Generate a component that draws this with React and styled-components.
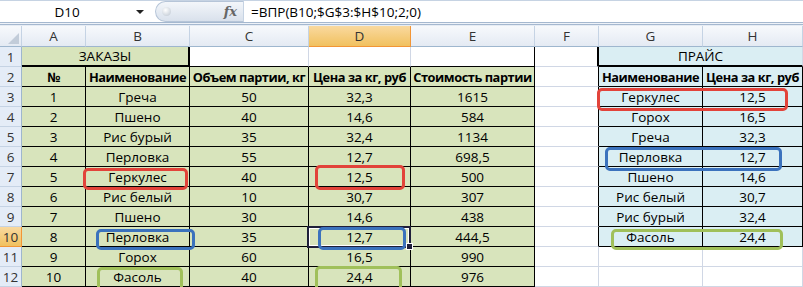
import React from 'react'
import styled, { createGlobalStyle } from 'styled-components'

const Global = createGlobalStyle`
  body {
    margin: 0;
    background: #fff;
    overflow: hidden;
  }
`

const FONT = '"Open Sans", "Noto Sans", "Liberation Sans", sans-serif'
const GRID = '#D0D7E5'
const HDR = '#9EB6CE'

const Page = styled.div`
  position: relative;
  width: 803px;
  height: 287px;
  overflow: hidden;
  background: #fff;
  font-family: ${FONT};
  color: #000;
`

const FormulaBar = styled.div`
  display: flex;
  height: 23px;
  box-sizing: border-box;
  border-top: 1px solid #C6D3E3;
  border-bottom: 1px solid #A5B8CF;
  background: #fff;
`

const NameBox = styled.div`
  position: relative;
  width: 152px;
  display: flex;
  align-items: center;
  justify-content: center;
  padding-right: 18px;
  box-sizing: border-box;
  font-size: 13.5px;
  .arrow {
    position: absolute;
    right: 8px;
    top: 9px;
    border-left: 4px solid transparent;
    border-right: 4px solid transparent;
    border-top: 4px solid #222;
  }
`

const Grip = styled.div`
  position: relative;
  width: 88px;
  margin: 0 0 0 3px;
  border-radius: 12px 0 0 12px;
  background: linear-gradient(#F3F6FA, #D9E1EC);
  border: 1px solid #B6C5D8;
  border-right: none;
  box-sizing: border-box;
  display: flex;
  align-items: center;
  justify-content: flex-end;
  padding-right: 6px;
  .dot {
    position: absolute;
    left: 6px;
    top: 5px;
    width: 9px;
    height: 9px;
    border-radius: 50%;
    background: radial-gradient(circle at 40% 35%, #fff, #B9C3CF);
  }
  .fx {
    font-family: "DejaVu Serif", "Liberation Serif", serif;
    font-style: italic;
    font-weight: bold;
    font-size: 13px;
    color: #666;
  }
`

const Formula = styled.div`
  flex: 1;
  display: flex;
  align-items: center;
  padding-left: 7px;
  font-size: 13.5px;
  border-left: 1px solid #C6D3E3;
`

const Band = styled.div`
  height: 3px;
  background: linear-gradient(#EEF2F8 0 1px, #A5B8CF 1px 2px, #E6ECF4 2px);
`

const Sheet = styled.div`
  display: grid;
  grid-template-columns: 22px 64px 104px 119px 102px 124px 64px 104px 1fr;
  grid-template-rows: 21px;
  grid-auto-rows: 20px;
`

const ColHead = styled.div`
  display: flex;
  align-items: center;
  justify-content: center;
  box-sizing: border-box;
  font-size: 13.5px;
  color: #333;
  border-right: 1px solid ${p => (p.$sel ? '#F29536' : '#C5D3E4')};
  border-bottom: 1px solid ${p => (p.$sel ? '#F29536' : HDR)};
  background: ${p =>
    p.$sel
      ? 'linear-gradient(#F9D99F, #F1C15F)'
      : 'linear-gradient(#F7F9FC, #E4EAF3)'};
`

const Corner = styled(ColHead)`
  position: relative;
  &::after {
    content: "";
    position: absolute;
    right: 2px;
    bottom: 2px;
    border-left: 11px solid transparent;
    border-bottom: 11px solid #C2CCD9;
  }
`

const RowHead = styled.div`
  display: flex;
  align-items: center;
  justify-content: center;
  box-sizing: border-box;
  font-size: 13.5px;
  color: #333;
  border-right: 1px solid ${p => (p.$sel ? '#F29536' : HDR)};
  border-bottom: 1px solid ${p => (p.$sel ? '#F29536' : '#C5D3E4')};
  background: ${p => (p.$sel ? 'linear-gradient(#F9D99F, #F1C15F)' : '#E4ECF7')};
`

const Cell = styled.div`
  display: flex;
  align-items: center;
  justify-content: center;
  box-sizing: border-box;
  white-space: nowrap;
  overflow: hidden;
  font-size: ${p => (p.$bold ? '12.8px' : '13.5px')};
  letter-spacing: ${p => (p.$bold ? '-0.45px' : 'normal')};
  font-weight: ${p => (p.$bold ? 700 : 400)};
  background: ${p => p.$bg || '#fff'};
  border-right: ${p => p.$r || `1px solid ${GRID}`};
  border-bottom: ${p => p.$b || `1px solid ${GRID}`};
  grid-column: ${p => (p.$span ? `span ${p.$span}` : 'auto')};
`

const Ring = styled.div`
  position: absolute;
  left: ${p => p.$x}px;
  top: ${p => p.$y}px;
  width: ${p => p.$w}px;
  height: ${p => p.$h}px;
  box-sizing: border-box;
  border: 3px solid ${p => p.$c};
  border-radius: 5px;
  pointer-events: none;
`

const Selection = styled.div`
  position: absolute;
  left: 307px;
  top: 226px;
  width: 104px;
  height: 22px;
  box-sizing: border-box;
  border: 2px solid #1F1F3A;
  box-shadow: inset 0 0 0 1px #fff;
  &::after {
    content: "";
    position: absolute;
    right: -4px;
    bottom: -4px;
    width: 5px;
    height: 5px;
    background: #1F1F3A;
    border: 1px solid #fff;
  }
`

const GREEN = '#D8E4BC'
const BLUE = '#DAEEF3'
const BLACK = '1px solid #000'
const THICK = '2px solid #000'

const orders = [
  ['1', 'Греча', '50', '32,3', '1615'],
  ['2', 'Пшено', '40', '14,6', '584'],
  ['3', 'Рис бурый', '35', '32,4', '1134'],
  ['4', 'Перловка', '55', '12,7', '698,5'],
  ['5', 'Геркулес', '40', '12,5', '500'],
  ['6', 'Рис белый', '10', '30,7', '307'],
  ['7', 'Пшено', '30', '14,6', '438'],
  ['8', 'Перловка', '35', '12,7', '444,5'],
  ['9', 'Горох', '60', '16,5', '990'],
  ['10', 'Фасоль', '40', '24,4', '976'],
]

const prices = [
  ['Геркулес', '12,5'],
  ['Горох', '16,5'],
  ['Греча', '32,3'],
  ['Перловка', '12,7'],
  ['Пшено', '14,6'],
  ['Рис белый', '30,7'],
  ['Рис бурый', '32,4'],
  ['Фасоль', '24,4'],
]

const cols = ['A', 'B', 'C', 'D', 'E', 'F', 'G', 'H']

const rings = [
  { x: 83, y: 168, w: 105, h: 22, c: '#E2433A' },
  { x: 315, y: 165, w: 90, h: 25, c: '#E2433A' },
  { x: 597, y: 88, w: 191, h: 23, c: '#E2433A' },
  { x: 96, y: 229, w: 99, h: 21, c: '#3B72BD' },
  { x: 318, y: 227, w: 88, h: 23, c: '#3B72BD' },
  { x: 605, y: 147, w: 177, h: 24, c: '#3B72BD' },
  { x: 97, y: 267, w: 86, h: 26, c: '#A0C05A' },
  { x: 315, y: 266, w: 87, h: 27, c: '#A0C05A' },
  { x: 611, y: 229, w: 172, h: 21, c: '#A0C05A' },
]

const PriceCells = ({ row }) => {
  const i = row - 3
  if (row === 1) {
    return <Cell $span={2} $bg={BLUE} $b={THICK}>ПРАЙС</Cell>
  }
  if (row === 2) {
    return (
      <>
        <Cell $bg={BLUE} $bold $r={BLACK} $b={BLACK}>Наименование</Cell>
        <Cell $bg={BLUE} $bold $r={BLACK} $b={BLACK}>Цена за кг, руб</Cell>
      </>
    )
  }
  if (i < prices.length) {
    return (
      <>
        <Cell $bg={BLUE} $r={BLACK} $b={BLACK}>{prices[i][0]}</Cell>
        <Cell $bg={BLUE} $r={BLACK} $b={BLACK}>{prices[i][1]}</Cell>
      </>
    )
  }
  return (
    <>
      <Cell />
      <Cell />
    </>
  )
}

const Row = ({ n }) => {
  const fRight = n === 1 ? THICK : n <= 10 ? BLACK : undefined
  return (
    <>
      <RowHead $sel={n === 10}>{n}</RowHead>
      {n === 1 ? (
        <>
          <Cell $span={2} $bg={GREEN} $r={THICK} $b={THICK}>ЗАКАЗЫ</Cell>
          <Cell $b={BLACK} />
          <Cell $b={BLACK} />
          <Cell $r={BLACK} $b={BLACK} />
        </>
      ) : n === 2 ? (
        ['№', 'Наименование', 'Объем партии, кг', 'Цена за кг, руб', 'Стоимость партии'].map(t => (
          <Cell key={t} $bg={GREEN} $bold $r={BLACK} $b={BLACK}>{t}</Cell>
        ))
      ) : (
        orders[n - 3].map((t, k) => (
          <Cell key={k} $bg={GREEN} $r={BLACK} $b={BLACK}>{t}</Cell>
        ))
      )}
      <Cell $r={fRight} />
      <PriceCells row={n} />
    </>
  )
}

export default function App() {
  return (
    <Page>
      <Global />
      <FormulaBar>
        <NameBox>
          D10
          <span className="arrow" />
        </NameBox>
        <Grip>
          <span className="dot" />
          <span className="fx">fx</span>
        </Grip>
        <Formula>=ВПР(B10;$G$3:$H$10;2;0)</Formula>
      </FormulaBar>
      <Band />
      <Sheet>
        <Corner />
        {cols.map(c => (
          <ColHead key={c} $sel={c === 'D'}>{c}</ColHead>
        ))}
        {Array.from({ length: 12 }, (_, i) => (
          <Row key={i} n={i + 1} />
        ))}
      </Sheet>
      <Selection />
      {rings.map((r, i) => (
        <Ring key={i} $x={r.x} $y={r.y} $w={r.w} $h={r.h} $c={r.c} />
      ))}
    </Page>
  )
}
